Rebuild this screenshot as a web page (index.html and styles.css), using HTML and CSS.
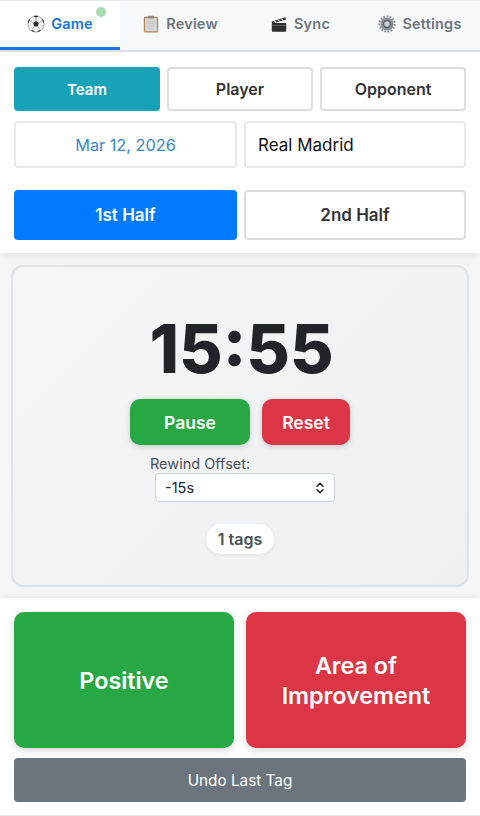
FILE: index.html
```html
<!DOCTYPE html>
<html>
  <head>
    <meta charset="UTF-8" />
    <meta name="viewport" content="width=device-width, initial-scale=1" />
    <link rel="stylesheet" href="styles.css">
  </head>
  <body>
    <nav class="tabs">
      <div class="tab active">
        <svg class="tab-icon" viewBox="0 0 20 20">
          <circle cx="10" cy="10" r="9" fill="#f2f2f2" stroke="#8b8b8b" stroke-width="0.8"/>
          <path d="M10 6.6l3.2 2.3-1.2 3.8H8l-1.2-3.8z" fill="#2b2b2b"/>
          <path d="M7.5 1.4L10 3l2.5-1.6C11 .8 9 .8 7.5 1.4zM1 9.6l1.9-3.3.6-2.6C1.9 5 1 7.2 1 9.6zM19 9.6c0-2.4-.9-4.6-2.5-5.9l.6 2.6zM4.3 16.9l3 .4 1.3 1.6c-1.7-.2-3.2-.9-4.300-2zM15.7 16.9l-3 .4-1.3 1.6c1.7-.2 3.2-.9 4.3-2z" fill="#2b2b2b"/>
          <path d="M10 3v3.600M6.800 8.900L3 6.300M13.200 8.900L17 6.300M8 12.700l-2.500 3.800M12 12.700l2.500 3.800" stroke="#8b8b8b" stroke-width="0.7"/>
        </svg>
        <span>Game</span>
        <span class="status-dot"></span>
      </div>
      <div class="tab">
        <svg class="tab-icon" viewBox="0 0 20 20">
          <rect x="2" y="2" width="16" height="17.500" rx="1.200" fill="#b98a5e"/>
          <rect x="3.500" y="3.500" width="13" height="14.500" fill="#d6d6d6"/>
          <path d="M5.500 7h9M5.500 9.500h9M5.500 12h9M5.500 14.500h6" stroke="#bdbdbd" stroke-width="0.8"/>
          <rect x="6.500" y="0.800" width="7" height="3" rx="0.800" fill="#8a8a8a"/>
        </svg>
        <span>Review</span>
      </div>
      <div class="tab">
        <svg class="tab-icon" viewBox="0 0 20 20">
          <rect x="2" y="9" width="16" height="9.500" rx="0.800" fill="#2e2e2e"/>
          <path d="M2 11.500h16" stroke="#8d8d8d" stroke-width="0.7"/>
          <path d="M1.800 7.200L17 2.500l0.800 2.600L2.600 9.800z" fill="#333"/>
          <path d="M4.500 6.400l2.300 2M8.500 5.200l2.300 2M12.500 4l2.300 2" stroke="#e6e6e6" stroke-width="1.300"/>
        </svg>
        <span>Sync</span>
      </div>
      <div class="tab">
        <svg class="tab-icon" viewBox="0 0 20 20">
          <circle cx="10" cy="10" r="7.300" fill="#8a9096"/>
          <circle cx="10" cy="10" r="8.500" fill="none" stroke="#8a9096" stroke-width="2.200" stroke-dasharray="2 1.560"/>
          <circle cx="10" cy="10" r="4.600" fill="#5d6369"/>
          <circle cx="10" cy="10" r="3" fill="#c9ced3"/>
        </svg>
        <span>Settings</span>
      </div>
    </nav>

    <section class="setup">
      <div class="type-row">
        <div class="btn btn-team">Team</div>
        <div class="btn btn-outline">Player</div>
        <div class="btn btn-outline">Opponent</div>
      </div>
      <div class="field-row">
        <div class="field field-date">Mar 12, 2026</div>
        <div class="field">Real Madrid</div>
      </div>
      <div class="half-row">
        <div class="btn btn-half">1st Half</div>
        <div class="btn btn-outline">2nd Half</div>
      </div>
    </section>

    <main class="timer-area">
      <div class="timer-card">
        <div class="clock">15:55</div>
        <div class="clock-buttons">
          <div class="clock-btn pause">Pause</div>
          <div class="clock-btn reset">Reset</div>
        </div>
        <div class="rewind">
          <div class="rewind-label">Rewind Offset:</div>
          <div class="select">
            <span>-15s</span>
            <svg class="select-arrows" viewBox="0 0 10 14">
              <path d="M2 5.200L5 2.200l3 3M2 8.800l3 3 3-3" fill="none" stroke="#222" stroke-width="1.500" stroke-linecap="round" stroke-linejoin="round"/>
            </svg>
          </div>
        </div>
        <div class="tag-count">1 tags</div>
      </div>
    </main>

    <section class="tagging">
      <div class="tag-row">
        <div class="tag-btn pause">Positive</div>
        <div class="tag-btn reset">Area of Improvement</div>
      </div>
      <div class="undo">Undo Last Tag</div>
    </section>
  </body>
</html>
```

FILE: styles.css
```css
* {
  box-sizing: border-box;
}

body {
  margin: 0px;
  padding: 0px;
  height: 816px;
  overflow: hidden;
  font-family: Inter, "Liberation Sans", sans-serif;
  background-color: white;
  color: #212529;
}

/* tabs */
.tabs {
  display: flex;
  height: 52px;
  background-color: #f6f8fa;
  border-top: 1px solid #e6e9ec;
  border-bottom: 2px solid #dee2e6;
}
.tab {
  position: relative;
  flex: 1;
  display: flex;
  align-items: center;
  justify-content: center;
  gap: 6px;
  height: 49px;
  padding-bottom: 4px;
  font-size: 14.500px;
  letter-spacing: 0.2px;
  font-weight: 600;
  color: #6c757d;
}
.tab.active {
  padding-bottom: 1px;
  color: #1a73d9;
  background-color: white;
  border-bottom: 3px solid #1a73e8;
}
.tab-icon {
  width: 18px;
  height: 18px;
}
.status-dot {
  position: absolute;
  top: 6px;
  left: 96px;
  width: 10px;
  height: 10px;
  border-radius: 50%;
  background-color: #a5dcb4;
}

/* top controls */
.setup {
  position: relative;
  height: 201px;
  padding: 15px 14px 0;
  background-color: white;
  box-shadow: 0 2px 6px rgba(0, 0, 0, 0.08);
}
.type-row {
  display: grid;
  grid-template-columns: 146px 146px 146px;
  gap: 7px;
  height: 44px;
}
.field-row {
  display: grid;
  grid-template-columns: 223px 222px;
  gap: 7px;
  height: 47px;
  margin-top: 10px;
}
.half-row {
  display: grid;
  grid-template-columns: 223px 222px;
  gap: 7px;
  height: 50px;
  margin-top: 22px;
}
.btn {
  display: flex;
  align-items: center;
  justify-content: center;
  border-radius: 4px;
  font-size: 17px;
  font-weight: 600;
}
.btn-team {
  background-color: #17a2b8;
  color: white;
}
.btn-half {
  background-color: #007bff;
  color: white;
}
.btn-outline {
  background-color: white;
  border: 2px solid #dcdcdc;
  color: #333;
}
.type-row .btn {
  font-size: 16px;
}
.type-row .btn-team {
  font-size: 15px;
}
.field {
  display: flex;
  align-items: center;
  padding-left: 12px;
  background-color: white;
  border: 2px solid #e8e8e8;
  border-radius: 4px;
  font-size: 17px;
  color: #111;
}
.field-date {
  justify-content: center;
  padding-left: 0;
  font-size: 16.300px;
  color: #3a87cf;
}

/* timer */
.timer-area {
  height: 345px;
  padding: 12px 11px 11px;
  background-color: #f5f5f6;
}
.timer-card {
  display: flex;
  flex-direction: column;
  align-items: center;
  height: 322px;
  padding-top: 46px;
  border: 2px solid #e0e3e7;
  border-radius: 12px;
  background-image: linear-gradient(135deg, #f4f6f7 0%, #edeff1 100%);
}
.clock {
  margin-left: 3px;
  font-size: 67px;
  line-height: 72px;
  font-weight: 800;
  color: #212529;
}
.clock-buttons {
  display: flex;
  gap: 12px;
  margin-top: 14px;
}
.clock-btn {
  display: flex;
  align-items: center;
  justify-content: center;
  height: 46px;
  border-radius: 10px;
  font-size: 17.500px;
  font-weight: 600;
  color: white;
  box-shadow: 0 2px 6px rgba(0, 0, 0, 0.15);
}
.clock-btn.pause {
  width: 120px;
}
.clock-btn.reset {
  width: 88px;
}
.pause {
  background-color: #28a745;
}
.reset {
  background-color: #dc3545;
}
.rewind {
  width: 185px;
  margin-top: 10px;
  margin-left: 5px;
}
.rewind-label {
  font-size: 14.500px;
  line-height: 18px;
  color: #495057;
}
.select {
  display: flex;
  align-items: center;
  justify-content: space-between;
  width: 180px;
  height: 29px;
  margin-left: 5px;
  padding: 0 9px;
  background-color: white;
  border: 1px solid #ced4da;
  border-radius: 4px;
  font-size: 14.500px;
  color: #212529;
}
.select-arrows {
  width: 10px;
  height: 14px;
}
.tag-count {
  display: flex;
  align-items: center;
  height: 30px;
  margin-top: 22px;
  padding: 0 12px;
  background-color: white;
  border-radius: 15px;
  font-size: 16px;
  font-weight: 600;
  color: #495057;
  box-shadow: 0 1px 4px rgba(0, 0, 0, 0.06);
}

/* tag buttons */
.tagging {
  position: relative;
  height: 218px;
  padding: 14px 14px 0;
  background-color: white;
  border-bottom: 1px solid #e6e9ec;
  box-shadow: 0 -2px 6px rgba(0, 0, 0, 0.05);
}
.tag-row {
  display: grid;
  grid-template-columns: 220px 220px;
  gap: 12px;
  height: 136px;
}
.tag-btn {
  display: flex;
  align-items: center;
  justify-content: center;
  padding: 2px 20px 0;
  border-radius: 10px;
  text-align: center;
  font-size: 23.300px;
  line-height: 30px;
  font-weight: 600;
  color: white;
  box-shadow: 0 3px 8px rgba(0, 0, 0, 0.15);
}
.undo {
  display: flex;
  align-items: center;
  justify-content: center;
  height: 44px;
  margin-top: 10px;
  background-color: #6c757d;
  border-radius: 4px;
  font-size: 15.300px;
  color: white;
}
```
